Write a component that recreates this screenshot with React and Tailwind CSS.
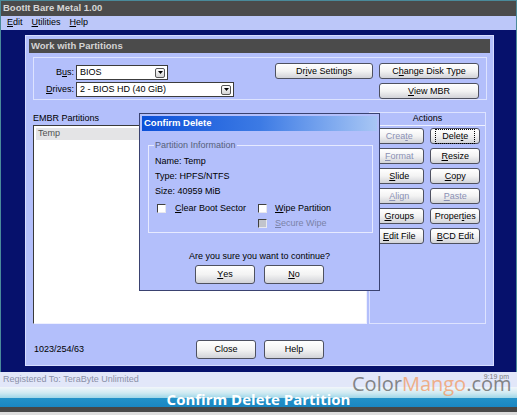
import React from "react";

const U = ({ children }) => <span className="underline underline-offset-[1px]">{children}</span>;

function Btn({ className = "", children, disabled, focus }) {
  return (
    <div
      className={`flex items-center justify-center rounded-[3px] border border-[#4e5160] bg-linear-to-b from-white via-[#f3f3f3] to-[#d2d3d8] text-[9px] leading-none ${
        disabled ? "text-[#8a90b4]" : "text-black"
      } ${className}`}
    >
      {focus ? (
        <span className="border border-dotted border-black px-[6px] py-[2px]">{children}</span>
      ) : (
        children
      )}
    </div>
  );
}

function Select({ w, value }) {
  return (
    <div
      className={`flex h-[15px] items-center justify-between border border-[#3c3c3c] bg-white pl-[3px] pr-[2px] text-[9px] leading-none text-black ${w}`}
    >
      <span>{value}</span>
      <div className="flex h-[10px] w-[10px] items-center justify-center rounded-[2px] border border-[#555] bg-linear-to-b from-white to-[#d4d4d4]">
        <svg width="5" height="3" viewBox="0 0 5 3">
          <path d="M0 0h5L2.5 3z" fill="#000" />
        </svg>
      </div>
    </div>
  );
}

function Check({ disabled }) {
  return (
    <div
      className={`h-[9px] w-[9px] shrink-0 border border-t-[#404040] border-l-[#404040] border-b-[#e8e8ee] border-r-[#e8e8ee] ${
        disabled ? "bg-[#c2c4cc]" : "bg-white"
      }`}
    />
  );
}

export default function App() {
  return (
    <div
      className="relative flex h-[415px] w-[517px] flex-col overflow-hidden bg-white"
      style={{ fontFamily: '"Liberation Sans", Arial, sans-serif' }}
    >
      <div className="flex flex-col border-x border-t border-[#4a8a9a]">
        {/* Title bar */}
        <div className="flex h-[15px] items-center bg-[#4b4b4b] pl-[2px] text-[9.5px] font-bold text-[#d6d6d6]">
          BootIt Bare Metal 1.00
        </div>
        {/* Menu */}
        <div className="flex h-[14px] items-center gap-[9px] bg-[#bcc7f9] pl-[6px] text-[9px] text-black">
          <span>
            <U>E</U>dit
          </span>
          <span>
            <U>U</U>tilities
          </span>
          <span>
            <U>H</U>elp
          </span>
        </div>
        {/* Navy desktop */}
        <div className="h-[342px] bg-[#06116c] pl-[24px] pt-[5px]">
          {/* Work with Partitions window */}
          <div className="relative flex h-[331px] w-[469px] flex-col border border-[#d6dcff] bg-[#b3bffb] p-[3px]">
            <div className="flex h-[14px] shrink-0 items-center bg-[#4b4b4b] pl-[2px] text-[9.5px] font-bold text-[#d4d4d4]">
              Work with Partitions
            </div>
            <div className="flex flex-col px-[4px] pt-[4px]">
              {/* Top group */}
              <div className="flex h-[43px] w-[454px] border border-[#dde3ff] pt-[5px] pr-[7px]">
                <div className="flex flex-col gap-[2px] pt-[2px]">
                  <div className="flex items-center">
                    <span className="w-[42px] pr-[2px] text-right text-[9px] text-black">
                      B<U>u</U>s:
                    </span>
                    <Select w="w-[92px]" value="BIOS" />
                  </div>
                  <div className="flex items-center">
                    <span className="w-[42px] pr-[2px] text-right text-[9px] text-black">
                      <U>D</U>rives:
                    </span>
                    <Select w="w-[158px]" value="2 - BIOS HD (40 GiB)" />
                  </div>
                </div>
                <div className="ml-auto flex gap-[6px]">
                  <Btn className="h-[16px] w-[98px]">
                    Dr<U>i</U>ve Settings
                  </Btn>
                  <div className="flex flex-col gap-[4px]">
                    <Btn className="h-[16px] w-[100px]">
                      C<U>h</U>ange Disk Type
                    </Btn>
                    <Btn className="h-[16px] w-[100px]">
                      <U>V</U>iew MBR
                    </Btn>
                  </div>
                </div>
              </div>

              {/* Lower section */}
              <div className="mt-[12px] flex gap-[2px]">
                <div className="flex w-[335px] flex-col">
                  <div className="h-[13px] pt-[1px] text-[9px] leading-[11px] text-black">EMBR Partitions</div>
                  <div className="h-[199px] border border-t-[#3a3a3a] border-l-[#3a3a3a] border-b-[#eef0ff] border-r-[#eef0ff] bg-white p-[2px]">
                    <div className="flex h-[12px] items-center bg-[#e4e4e6] pl-[2px] text-[9px] text-[#505050]">Temp</div>
                  </div>
                </div>
                <div className="flex h-[212px] w-[117px] flex-col border border-[#dde3ff]">
                  <div className="flex h-[13px] items-center justify-center border-b border-[#eef1ff] text-[9px] text-black">
                    Actions
                  </div>
                  <div className="grid grid-cols-[50px_50px] gap-x-[6px] gap-y-[4px] pl-[4px] pt-[2px]">
                    <Btn className="h-[16px]" disabled>
                      Crea<U>t</U>e
                    </Btn>
                    <Btn className="h-[16px]" focus>
                      Dele<U>t</U>e
                    </Btn>
                    <Btn className="h-[16px]" disabled>
                      <U>F</U>ormat
                    </Btn>
                    <Btn className="h-[16px]">
                      <U>R</U>esize
                    </Btn>
                    <Btn className="h-[16px]">
                      <U>S</U>lide
                    </Btn>
                    <Btn className="h-[16px]">
                      <U>C</U>opy
                    </Btn>
                    <Btn className="h-[16px]" disabled>
                      <U>A</U>lign
                    </Btn>
                    <Btn className="h-[16px]" disabled>
                      <U>P</U>aste
                    </Btn>
                    <Btn className="h-[16px]">
                      <U>G</U>roups
                    </Btn>
                    <Btn className="h-[16px]">
                      Proper<U>t</U>ies
                    </Btn>
                    <Btn className="h-[16px]">
                      <U>E</U>dit File
                    </Btn>
                    <Btn className="h-[16px]">
                      <U>B</U>CD Edit
                    </Btn>
                  </div>
                </div>
              </div>

              {/* Bottom row */}
              <div className="mt-[16px] flex items-center">
                <span className="w-[163px] pl-[1px] text-[9px] text-black">1023/254/63</span>
                <Btn className="h-[19px] w-[60px]">Close</Btn>
                <Btn className="ml-[8px] h-[19px] w-[60px]">Help</Btn>
              </div>
            </div>

            {/* Confirm Delete dialog */}
            <div className="absolute left-[113px] top-[77px] flex h-[178px] w-[241px] flex-col border border-[#3a4270] bg-[#b3bffb] p-[2px]">
              <div className="flex h-[15px] items-center bg-linear-to-r from-[#0a4fd8] via-[#3c7ae4] to-[#a8c6f4] pl-[2px] text-[9.5px] font-bold text-white">
                Confirm Delete
              </div>
              <div className="flex flex-col px-[6px] pt-[14px]">
                <div className="relative h-[88px] w-[225px] border border-[#e6eaff] pl-[6px] pt-[8px] text-[9px] text-black">
                  <span className="absolute -top-[6px] left-[5px] bg-[#b3bffb] px-[1px] text-[9px] leading-[11px] text-[#56607a]">
                    Partition Information
                  </span>
                  <div className="leading-[15px]">Name: Temp</div>
                  <div className="leading-[15px]">Type: HPFS/NTFS</div>
                  <div className="leading-[15px]">Size: 40959 MiB</div>
                  <div className="mt-[3px] flex items-start">
                    <div className="flex w-[103px] items-center gap-[9px] pl-[2px]">
                      <Check />
                      <span>
                        <U>C</U>lear Boot Sector
                      </span>
                    </div>
                    <div className="flex flex-col gap-[1px]">
                      <div className="flex items-center gap-[8px]">
                        <Check />
                        <span>
                          <U>W</U>ipe Partition
                        </span>
                      </div>
                      <div className="flex items-center gap-[8px] text-[#7a82a8]">
                        <Check disabled />
                        <span>
                          <U>S</U>ecure Wipe
                        </span>
                      </div>
                    </div>
                  </div>
                </div>
                <div className="mt-[18px] text-center text-[9px] leading-[11px] text-black">
                  Are you sure you want to continue?
                </div>
                <div className="mt-[3px] flex justify-center gap-[9px]">
                  <Btn className="h-[19px] w-[60px]">
                    <U>Y</U>es
                  </Btn>
                  <Btn className="h-[19px] w-[60px]">
                    <U>N</U>o
                  </Btn>
                </div>
              </div>
            </div>
          </div>
        </div>
      </div>

      {/* Status bar */}
      <div className="flex h-[15px] items-start bg-[#e2e7f9] pl-[3px] text-[9px] text-[#8a90a8]">
        <span className="leading-[15px]">Registered To: TeraByte Unlimited</span>
        <span className="ml-auto pr-[8px] text-[7px] leading-[10px] text-[#7a7a7a]">9:19 pm</span>
      </div>

      {/* Banner */}
      <div className="flex h-[28px] items-start justify-center bg-[linear-gradient(to_bottom,#f2f6fa_0px,#cfeaf2_6px,#9ed6e8_11px,#2392c8_11px,#1a86c2_20px,#474747_20px,#474747_25px,#dcdcdc_25px)]">
        <span
          className="mt-[3px] text-[15px] font-bold leading-[18px] text-white"
          style={{ fontFamily: '"Open Sans", sans-serif' }}
        >
          Confirm Delete Partition
        </span>
      </div>

      {/* Watermark */}
      <div
        className="absolute left-[352px] top-[371px] text-[20px] leading-[26px] opacity-80"
        style={{ fontFamily: '"Open Sans", sans-serif' }}
      >
        <span className="text-[#6b6b6b]">Color</span>
        <span className="text-[#f2a06c]">Mango</span>
        <span className="text-[#6b6b6b]">.com</span>
      </div>
    </div>
  );
}
